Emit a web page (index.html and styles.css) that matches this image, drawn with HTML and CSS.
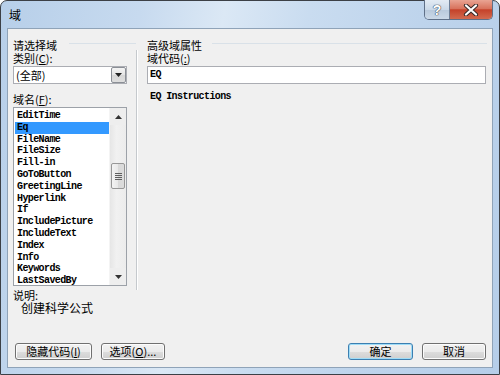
FILE: index.html
```html
<!DOCTYPE html>
<html>
<head>
<meta charset="utf-8">
<link rel="stylesheet" href="styles.css">
</head>
<body>
<div class="window">
  <div class="titlebar">
    <span class="title">域</span>
    <div class="caption-btns">
      <span class="cap help">?</span>
      <span class="cap close"><svg width="16" height="12" viewBox="0 0 16 12"><path d="M3 1.5 L13 10.5 M13 1.5 L3 10.5" stroke="#3a2a28" stroke-width="4.2" stroke-linecap="round"/><path d="M3 1.5 L13 10.5 M13 1.5 L3 10.5" stroke="#ffffff" stroke-width="2.2" stroke-linecap="round"/></svg></span>
    </div>
  </div>
  <div class="client">
    <div class="top">
      <div class="left">
        <div class="group-title left-gt"><span>请选择域</span><i class="gline"></i></div>
        <div class="label">类别(<u>C</u>):</div>
        <div class="combo">
          <span class="combo-text">(全部)</span>
          <span class="drop"><svg width="7" height="4" viewBox="0 0 7 4"><path d="M0 0 H7 L3.5 4 Z" fill="#222"/></svg></span>
        </div>
        <div class="label label2">域名(<u>F</u>):</div>
        <div class="listbox">
          <ul class="items">
            <li>EditTime</li>
            <li class="sel">Eq</li>
            <li>FileName</li>
            <li>FileSize</li>
            <li>Fill-in</li>
            <li>GoToButton</li>
            <li>GreetingLine</li>
            <li>Hyperlink</li>
            <li>If</li>
            <li>IncludePicture</li>
            <li>IncludeText</li>
            <li>Index</li>
            <li>Info</li>
            <li>Keywords</li>
            <li>LastSavedBy</li>
          </ul>
          <div class="scrollbar">
            <div class="arrow up"><svg width="7" height="4" viewBox="0 0 7 4"><path d="M0 4 H7 L3.5 0 Z" fill="#333"/></svg></div>
            <div class="track">
              <div class="thumb"><span class="grip"></span><span class="grip"></span><span class="grip"></span><span class="grip"></span></div>
            </div>
            <div class="arrow down"><svg width="7" height="4" viewBox="0 0 7 4"><path d="M0 0 H7 L3.5 4 Z" fill="#333"/></svg></div>
          </div>
        </div>
      </div>
      <div class="divider"></div>
      <div class="right">
        <div class="group-title"><span>高级域属性</span><i class="gline"></i></div>
        <div class="label">域代码(<u>:</u>)</div>
        <div class="input">EQ</div>
        <div class="instr">EQ Instructions</div>
      </div>
    </div>
    <div class="desc">
      <div class="desc-label">说明:</div>
      <div class="desc-text">创建科学公式</div>
    </div>
    <div class="buttons">
      <span class="btn b-hide">隐藏代码(<u>I</u>)</span>
      <span class="btn b-opt">选项(<u>O</u>)...</span>
      <span class="spacer"></span>
      <span class="btn b-ok">确定</span>
      <span class="btn b-cancel">取消</span>
    </div>
  </div>
</div>
</body>
</html>
```

FILE: styles.css
```css
html, body {
  margin: 0;
  padding: 0;
  background: #ffffff;
}

body {
  font-family: "Noto Sans CJK SC", "Liberation Sans", sans-serif;
  font-size: 11px;
  color: #000;
}

.window {
  width: 500px;
  height: 375px;
  box-sizing: border-box;
  border: 1px solid #3c4046;
  border-radius: 7px 7px 0 0;
  background: linear-gradient(100deg, #b7cfe9 0%, #c7daef 25%, #dbe8f5 40%, #c9dcf0 55%, #bed4ec 75%, #b6cee9 100%);
  padding: 0 6px 6px 6px;
  display: flex;
  flex-direction: column;
}

.titlebar {
  height: 27px;
  display: flex;
  align-items: flex-start;
}

.title {
  padding: 7px 0 0 2px;
  font-size: 12px;
  line-height: 14px;
  color: #000;
}

.caption-btns {
  margin-left: auto;
  margin-top: -1px;
  display: flex;
  height: 20px;
  border: 1px solid #5f7088;
  border-top: none;
  border-radius: 0 0 5px 5px;
  overflow: hidden;
  box-sizing: border-box;
}

.cap {
  height: 100%;
  display: flex;
  align-items: center;
  justify-content: center;
}

.help {
  width: 25px;
  background: linear-gradient(#e3ebf4, #cbd9e8 50%, #b8c9dc 51%, #cbd9e8);
  border-right: 1px solid #6e7f96;
  font-family: "Liberation Sans", sans-serif;
  font-size: 14px;
  font-weight: bold;
  color: #ffffff;
  text-shadow: 0 0 1px #3d4a5c, 0 0 1px #3d4a5c, 0 0 1px #3d4a5c;
  box-sizing: border-box;
}

.close {
  width: 42px;
  background: linear-gradient(#e9a493, #d8735d 45%, #c5422a 52%, #d26a4f);
}

.client {
  flex: 1;
  border: 1px solid #8fa3b8;
  background: #f0f0f0;
  display: flex;
  flex-direction: column;
  padding: 9px 0 7px 5px;
}

.top {
  display: flex;
  height: 248px;
}

.left {
  width: 114px;
  display: flex;
  flex-direction: column;
}

.group-title {
  height: 14px;
  line-height: 14px;
  display: flex;
  align-items: center;
  white-space: nowrap;
}

.left-gt {
  margin-right: -9px;
}

.gline {
  flex: 1;
  height: 1px;
  background: #d9e1e8;
  margin-left: 12px;
  margin-top: -3px;
}

.label {
  height: 13px;
  line-height: 13px;
  white-space: nowrap;
}

.label2 {
  margin-top: 9px;
}

.combo {
  margin-top: 1px;
  height: 18px;
  box-sizing: border-box;
  border: 1px solid #abadb3;
  background: #ffffff;
  display: flex;
  align-items: center;
}

.combo-text {
  flex: 1;
  padding-left: 2px;
  line-height: 14px;
}

.drop {
  width: 15px;
  height: 16px;
  box-sizing: border-box;
  border: 1px solid #8b8f96;
  border-radius: 2px;
  background: linear-gradient(#f4f4f4, #e4e4e4 50%, #d6d6d6 51%, #dedede);
  display: flex;
  align-items: center;
  justify-content: center;
}

.listbox {
  margin-top: 1px;
  height: 179px;
  box-sizing: border-box;
  border: 1px solid #9ca1a8;
  background: #ffffff;
  display: flex;
}

.items {
  list-style: none;
  margin: 0;
  padding: 2px 0 0 1px;
  flex: 1;
  font-family: "Liberation Mono", monospace;
  font-size: 10px;
  letter-spacing: -0.6px;
  font-weight: bold;
  overflow: hidden;
}

.items li {
  height: 11.8px;
  line-height: 11.8px;
  padding-left: 2px;
  white-space: nowrap;
}

.items li.sel {
  background: #3399ff;
  color: #000;
}

.scrollbar {
  width: 16px;
  display: flex;
  flex-direction: column;
  background: #eeeeee;
  border-left: 1px solid #f4f4f4;
}

.arrow {
  height: 17px;
  display: flex;
  align-items: center;
  justify-content: center;
}

.track {
  flex: 1;
  padding-top: 38px;
  background: linear-gradient(90deg, #e6e6e6, #f1f1f1 40%, #ececec);
}

.thumb {
  margin: 0 1px;
  height: 26px;
  box-sizing: border-box;
  border: 1px solid #979797;
  border-radius: 2px;
  background: linear-gradient(90deg, #f3f3f3, #e8e8e8 50%, #d9d9d9 51%, #dcdcdc);
  display: flex;
  flex-direction: column;
  align-items: center;
  justify-content: center;
  gap: 1px;
}

.grip {
  width: 7px;
  height: 1px;
  background: #5f5f5f;
}

.divider {
  width: 1px;
  margin: 12px 0 -4px 9px;
  background: #c5c9cd;
  box-shadow: 1px 0 0 #ffffff;
}

.right {
  width: 340px;
  margin-left: 10px;
  display: flex;
  flex-direction: column;
}

.right .gline {
  margin-left: 10px;
}

.input {
  margin-top: 1px;
  width: 339px;
  height: 18px;
  box-sizing: border-box;
  border: 1px solid #abadb3;
  background: #ffffff;
  font-family: "Liberation Mono", monospace;
  font-size: 10px;
  letter-spacing: -0.6px;
  font-weight: bold;
  line-height: 16px;
  padding-left: 2px;
}

.instr {
  margin-top: 7px;
  padding-left: 3px;
  height: 12px;
  line-height: 12px;
  font-family: "Liberation Mono", monospace;
  font-size: 10px;
  letter-spacing: -0.6px;
  font-weight: bold;
}

.desc {
  margin-top: 3px;
}

.desc-label {
  height: 12px;
  line-height: 12px;
}

.desc-text {
  height: 13px;
  line-height: 13px;
  padding-left: 8px;
  font-size: 12px;
}

.buttons {
  margin-top: auto;
  display: flex;
  padding: 0 6px 0 2px;
}

.btn {
  height: 17px;
  box-sizing: border-box;
  border: 1px solid #707070;
  border-radius: 3px;
  background: linear-gradient(#f2f2f2, #ebebeb 50%, #dddddd 51%, #cfcfcf);
  display: flex;
  align-items: center;
  justify-content: center;
  line-height: 13px;
  white-space: nowrap;
  box-shadow: inset 0 0 0 1px #fcfcfc;
}

.b-hide {
  width: 77px;
}

.b-opt {
  width: 64px;
  margin-left: 9px;
}

.spacer {
  flex: 1;
}

.b-ok {
  width: 65px;
  border-color: #3c7fb1;
  box-shadow: inset 0 0 0 1px #9fdcf7;
}

.b-cancel {
  width: 64px;
  margin-left: 9px;
}
```
